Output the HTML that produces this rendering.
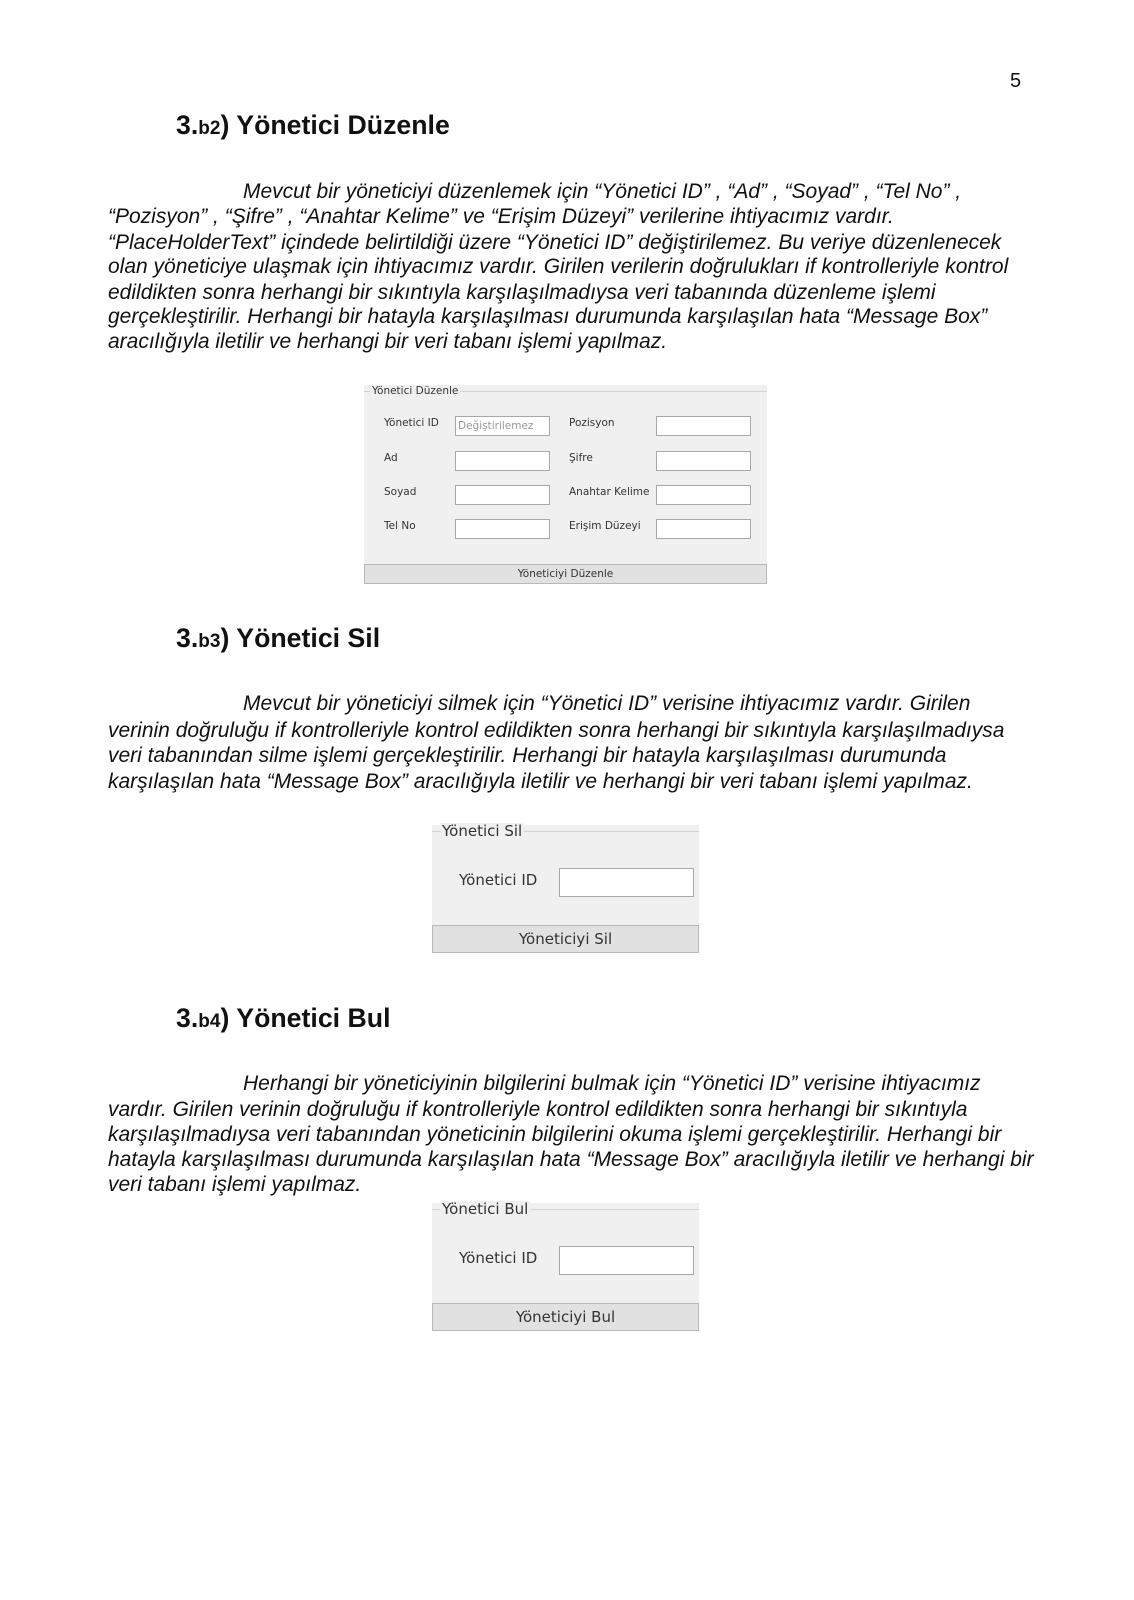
<!DOCTYPE html>
<html><head><meta charset="utf-8"><style>
body{margin:0;background:#fff;}
#p{position:relative;width:1134px;height:1600px;overflow:hidden;font-family:"Liberation Sans",Arial,sans-serif;color:#111;}
.a{position:absolute;white-space:nowrap;}
.h{font-weight:bold;font-size:26.7px;line-height:30px;left:176px;}
.h small{font-size:19px;}
.t{font-style:italic;font-size:21px;line-height:24px;left:108px;}
.pan{position:absolute;background:#f0f0f0;font-family:"DejaVu Sans",sans-serif;color:#333;}
.pan .bt{position:absolute;left:0;right:0;border-top:1px solid #d4d4d4;}
.pan .lg{position:absolute;background:#f0f0f0;padding:0 2px;}
.pan .l{position:absolute;}
.pan .b{position:absolute;background:#fff;border:1px solid #a8a8a8;box-sizing:border-box;}
.pan .btn{position:absolute;left:0;right:0;background:#e1e1e1;border:1px solid #b8b8b8;box-sizing:border-box;text-align:center;}
</style></head><body><div id="p">
<div class="a" style="left:1010px;top:70px;font-size:20px;">5</div>

<div class="a h" style="top:110px;">3.<small>b2</small>) Yönetici Düzenle</div>
<div class="a t" style="top:180px;left:243px;">Mevcut bir yöneticiyi düzenlemek için “Yönetici ID” , “Ad” , “Soyad” , “Tel No” ,</div>
<div class="a t" style="top:205px;">“Pozisyon” , “Şifre” , “Anahtar Kelime” ve “Erişim Düzeyi” verilerine ihtiyacımız vardır.</div>
<div class="a t" style="top:231px;">“PlaceHolderText” içindede belirtildiği üzere “Yönetici ID” değiştirilemez. Bu veriye düzenlenecek</div>
<div class="a t" style="top:255px;">olan yöneticiye ulaşmak için ihtiyacımız vardır. Girilen verilerin doğrulukları if kontrolleriyle kontrol</div>
<div class="a t" style="top:281px;">edildikten sonra herhangi bir sıkıntıyla karşılaşılmadıysa veri tabanında düzenleme işlemi</div>
<div class="a t" style="top:305px;">gerçekleştirilir. Herhangi bir hatayla karşılaşılması durumunda karşılaşılan hata “Message Box”</div>
<div class="a t" style="top:330px;">aracılığıyla iletilir ve herhangi bir veri tabanı işlemi yapılmaz.</div>

<div class="pan" style="left:364px;top:385px;width:403px;height:199px;font-size:10.5px;">
 <div class="bt" style="top:6px;"></div>
 <div class="lg" style="left:6px;top:0;line-height:12px;">Yönetici Düzenle</div>
 <div class="l" style="left:20px;top:32px;">Yönetici ID</div>
 <div class="b" style="left:91px;top:31px;width:95px;height:20px;color:#999;padding:3px 2px;font-size:10.5px;">Değiştirilemez</div>
 <div class="l" style="left:20px;top:67px;">Ad</div>
 <div class="b" style="left:91px;top:66px;width:95px;height:20px;"></div>
 <div class="l" style="left:20px;top:101px;">Soyad</div>
 <div class="b" style="left:91px;top:100px;width:95px;height:20px;"></div>
 <div class="l" style="left:20px;top:135px;">Tel No</div>
 <div class="b" style="left:91px;top:134px;width:95px;height:20px;"></div>
 <div class="l" style="left:205px;top:32px;">Pozisyon</div>
 <div class="b" style="left:292px;top:31px;width:95px;height:20px;"></div>
 <div class="l" style="left:205px;top:67px;">Şifre</div>
 <div class="b" style="left:292px;top:66px;width:95px;height:20px;"></div>
 <div class="l" style="left:205px;top:101px;">Anahtar Kelime</div>
 <div class="b" style="left:292px;top:100px;width:95px;height:20px;"></div>
 <div class="l" style="left:205px;top:135px;">Erişim Düzeyi</div>
 <div class="b" style="left:292px;top:134px;width:95px;height:20px;"></div>
 <div class="btn" style="top:179px;height:20px;line-height:18px;">Yöneticiyi Düzenle</div>
</div>

<div class="a h" style="top:623px;">3.<small>b3</small>) Yönetici Sil</div>
<div class="a t" style="top:692px;left:243px;">Mevcut bir yöneticiyi silmek için “Yönetici ID” verisine ihtiyacımız vardır. Girilen</div>
<div class="a t" style="top:719px;">verinin doğruluğu if kontrolleriyle kontrol edildikten sonra herhangi bir sıkıntıyla karşılaşılmadıysa</div>
<div class="a t" style="top:744px;">veri tabanından silme işlemi gerçekleştirilir. Herhangi bir hatayla karşılaşılması durumunda</div>
<div class="a t" style="top:770px;">karşılaşılan hata “Message Box” aracılığıyla iletilir ve herhangi bir veri tabanı işlemi yapılmaz.</div>

<div class="pan" style="left:432px;top:825px;width:267px;height:128px;font-size:15px;">
 <div class="bt" style="top:6px;"></div>
 <div class="lg" style="left:8px;top:-2px;line-height:17px;">Yönetici Sil</div>
 <div class="l" style="left:27px;top:46px;">Yönetici ID</div>
 <div class="b" style="left:127px;top:43px;width:135px;height:29px;"></div>
 <div class="btn" style="top:100px;height:28px;line-height:26px;">Yöneticiyi Sil</div>
</div>

<div class="a h" style="top:1003px;">3.<small>b4</small>) Yönetici Bul</div>
<div class="a t" style="top:1072px;left:243px;">Herhangi bir yöneticiyinin bilgilerini bulmak için “Yönetici ID” verisine ihtiyacımız</div>
<div class="a t" style="top:1098px;">vardır. Girilen verinin doğruluğu if kontrolleriyle kontrol edildikten sonra herhangi bir sıkıntıyla</div>
<div class="a t" style="top:1123px;">karşılaşılmadıysa veri tabanından yöneticinin bilgilerini okuma işlemi gerçekleştirilir. Herhangi bir</div>
<div class="a t" style="top:1148px;">hatayla karşılaşılması durumunda karşılaşılan hata “Message Box” aracılığıyla iletilir ve herhangi bir</div>
<div class="a t" style="top:1173px;">veri tabanı işlemi yapılmaz.</div>

<div class="pan" style="left:432px;top:1203px;width:267px;height:128px;font-size:15px;">
 <div class="bt" style="top:6px;"></div>
 <div class="lg" style="left:8px;top:-2px;line-height:17px;">Yönetici Bul</div>
 <div class="l" style="left:27px;top:46px;">Yönetici ID</div>
 <div class="b" style="left:127px;top:43px;width:135px;height:29px;"></div>
 <div class="btn" style="top:100px;height:28px;line-height:26px;">Yöneticiyi Bul</div>
</div>
</div></body></html>
